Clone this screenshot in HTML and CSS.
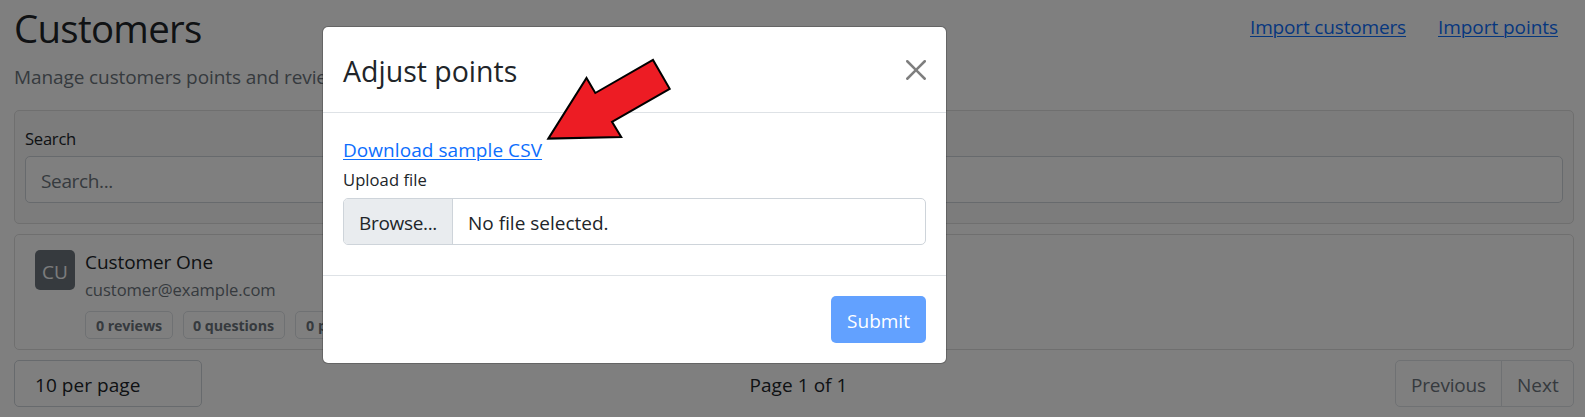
FILE: index.html
```html
<!DOCTYPE html>
<html lang="en">
<head>
<meta charset="utf-8">
<title>Customers</title>
<link rel="stylesheet" href="styles.css">
</head>
<body>
<main class="page">
  <header class="page-header">
    <div>
      <h1 class="page-title">Customers</h1>
      <p class="page-subtitle">Manage customers points and reviews</p>
    </div>
    <nav class="page-actions">
      <a class="link link-customers" href="#">Import customers</a>
      <a class="link" href="#">Import points</a>
    </nav>
  </header>

  <section class="card search-card">
    <label class="label label-search">Search</label>
    <div class="control search-input">Search...</div>
  </section>

  <section class="card customer-card">
    <div class="avatar">CU</div>
    <div>
      <div class="customer-name">Customer One</div>
      <div class="customer-email">customer@example.com</div>
      <div class="badges">
        <span class="badge badge-reviews">0 reviews</span>
        <span class="badge badge-questions">0 questions</span>
        <span class="badge">0 points</span>
      </div>
    </div>
  </section>

  <footer class="page-footer">
    <div class="control page-size">10 per page</div>
    <div class="page-count">Page 1 of 1</div>
    <div class="pagination">
      <span class="page-link page-prev">Previous</span>
      <span class="page-link page-next">Next</span>
    </div>
  </footer>
</main>

<div class="backdrop"></div>

<div class="modal">
  <div class="modal-header">
    <h2 class="modal-title">Adjust points</h2>
    <svg class="close" viewBox="0 0 16 16"><path d="M.293.293a1 1 0 011.414 0L8 6.586 14.293.293a1 1 0 111.414 1.414L9.414 8l6.293 6.293a1 1 0 01-1.414 1.414L8 9.414l-6.293 6.293a1 1 0 01-1.414-1.414L6.586 8 .293 1.707a1 1 0 010-1.414z"/></svg>
  </div>
  <div class="modal-body">
    <a class="link link-download" href="#">Download sample CSV</a>
    <label class="label label-upload">Upload file</label>
    <div class="file-input">
      <span class="file-button">Browse...</span>
      <span class="file-name">No file selected.</span>
    </div>
  </div>
  <div class="modal-footer">
    <button class="submit">Submit</button>
  </div>
</div>

<svg class="arrow" viewBox="0 0 130 90"><polygon points="8.3,88.6 46.5,28 55.3,43 113,9.9 129.7,38.8 72,71.8 81.2,87"/></svg>
</body>
</html>
```

FILE: styles.css
```css
* { box-sizing: border-box; }

body {
  margin: 0;
  height: 417px;
  overflow: hidden;
  background: #fff;
  color: #212529;
  font: 19px/30px "Open Sans", "Noto Sans", sans-serif;
}

h1, h2, p { margin: 0; font-weight: 400; }

.page { padding: 4px 11px 0 14px; }

.page-header {
  display: flex;
  justify-content: space-between;
  height: 106px;
}
.page-title {
  font-size: 38.4px;
  line-height: 49px;
  letter-spacing: -0.7px;
  margin-bottom: 9px;
}
.page-subtitle { color: #6c757d; letter-spacing: -0.1px; }
.page-actions {
  display: flex;
  gap: 32px;
  padding: 8px 16px 0 0;
}

.link {
  color: #0d6efd;
  text-decoration: underline;
  text-decoration-thickness: 1px;
  text-underline-offset: 2px;
  letter-spacing: -0.06px;
}
.link-customers { letter-spacing: -0.157px; }
.link-download { display: block; letter-spacing: 0.06px; }

.card {
  border: 1px solid #dfdfdf;
  border-radius: 5px;
}
.search-card {
  height: 114px;
  padding: 15px 10px 0;
  background: #f8f8f8;
}
.label { display: block; font-size: 16.6px; line-height: 26px; }
.label-search { letter-spacing: -0.257px; margin-bottom: 4px; }
.label-upload { letter-spacing: 0.05px; margin: 2px 0 5px; }

.control {
  height: 47px;
  background: #fff;
  border: 1px solid #ced4da;
  border-radius: 5px;
}
.search-input {
  padding: 9px 15px;
  color: #6c757d;
  letter-spacing: -0.349px;
}

.customer-card {
  display: flex;
  gap: 10px;
  height: 116px;
  margin-top: 10px;
  padding: 12px 20px 0;
}
.avatar {
  width: 40px;
  height: 40px;
  margin-top: 3px;
  padding-top: 7px;
  border-radius: 5px;
  background: #6c757d;
  color: #f8f9fa;
  text-align: center;
}
.customer-name { letter-spacing: -0.08px; }
.customer-email {
  color: #6c757d;
  font-size: 16.6px;
  line-height: 26px;
  letter-spacing: -0.08px;
}
.badges { display: flex; gap: 10px; margin-top: 8px; }
.badge {
  height: 28px;
  padding: 0 10px;
  border: 1px solid #dee2e6;
  border-radius: 5px;
  color: #6c757d;
  font-size: 14.3px;
  font-weight: 700;
  line-height: 28px;
  white-space: nowrap;
}
.badge-reviews { width: 88px; letter-spacing: -0.124px; }
.badge-questions { width: 102px; padding: 0 9px; letter-spacing: -0.074px; }

.page-footer {
  display: flex;
  justify-content: space-between;
  margin-top: 10px;
}
.page-size { width: 188px; padding: 9px 20px; letter-spacing: 0.05px; }
.page-count { padding-top: 10px; letter-spacing: 0.06px; }
.pagination { display: flex; }
.page-link {
  height: 47px;
  padding: 9px 15px;
  border: 1px solid #dee2e6;
  color: #6c757d;
}
.page-prev {
  width: 107px;
  border-radius: 5px 0 0 5px;
  letter-spacing: -0.161px;
}
.page-next {
  width: 73px;
  margin-left: -1px;
  border-radius: 0 5px 5px 0;
}

.backdrop {
  position: absolute;
  inset: 0;
  background: rgba(0, 0, 0, 0.5);
}

.modal {
  position: absolute;
  left: 322px;
  top: 26px;
  width: 625px;
  height: 338px;
  background: #fff;
  background-clip: padding-box;
  border: 1px solid rgba(0, 0, 0, 0.2);
  border-radius: 6px;
}
.modal-header {
  display: flex;
  justify-content: space-between;
  height: 86px;
  padding: 22px 20px 0;
  border-bottom: 1px solid #dee2e6;
}
.modal-title { font-size: 28.5px; line-height: 44px; }
.close {
  width: 20px;
  height: 20px;
  margin-top: 11px;
  opacity: 0.5;
}
.modal-body { height: 162px; padding: 22px 20px 0; }
.file-input {
  display: flex;
  height: 47px;
  border: 1px solid #ced4da;
  border-radius: 5px;
  overflow: hidden;
}
.file-button {
  width: 109px;
  padding: 9px 15px;
  background: #e9ecef;
  border-right: 1px solid #ced4da;
  letter-spacing: -0.321px;
}
.file-name { padding: 9px 15px; }
.modal-footer {
  display: flex;
  justify-content: flex-end;
  padding: 20px;
  border-top: 1px solid #dee2e6;
}
.submit {
  width: 95px;
  height: 47px;
  padding: 2px 0 0;
  border: 0;
  border-radius: 5px;
  background: #62a1ff;
  color: #fff;
  font: inherit;
}

.arrow {
  position: absolute;
  left: 540px;
  top: 50px;
  width: 130px;
  height: 90px;
  overflow: visible;
  fill: #ed1c24;
  stroke: #000;
  stroke-width: 2;
}
```
